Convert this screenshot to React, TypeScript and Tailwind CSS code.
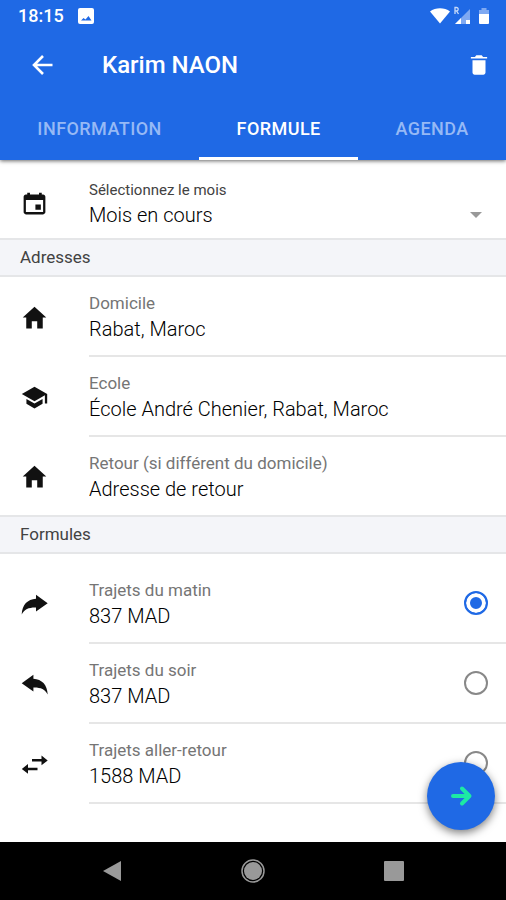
import { useState } from "react";
import type { ReactNode } from "react";
import { IoMdCalendar, IoMdHome, IoMdSchool, IoMdTrash } from "react-icons/io";

function ForwardIcon() {
  return (
    <svg className="size-[29px]" viewBox="0 0 29 29" fill="currentColor" aria-hidden="true">
      <path d="M27.700 13.200 16 4.800v4C7.500 9.500 2.200 14.500 1.700 24.500 4.500 19 9 17.200 16 17.400v4.100z" />
    </svg>
  );
}

function BackwardIcon() {
  return (
    <svg className="size-[29px]" viewBox="0 0 29 29" fill="currentColor" aria-hidden="true">
      <path d="M1.700 13.200 13.400 4.800v4c8.500.7 13.800 5.700 14.300 15.700-2.800-5.500-7.300-7.300-14.300-7.100v4.100z" />
    </svg>
  );
}

function RoundTripIcon() {
  return (
    <svg className="size-[29px]" viewBox="0 0 29 29" fill="currentColor" aria-hidden="true">
      <path d="M12 9h9.500V5.500l6.200 4.900-6.200 4.900v-3.700H12zM17.500 17.700H8V14l-6.200 4.900L8 23.800v-3.500h9.500z" />
    </svg>
  );
}

const addresses = [
  { id: "domicile", label: "Domicile", value: "Rabat, Maroc", icon: <IoMdHome /> },
  { id: "ecole", label: "Ecole", value: "École André Chenier, Rabat, Maroc", icon: <IoMdSchool /> },
  { id: "retour", label: "Retour (si différent du domicile)", value: "Adresse de retour", icon: <IoMdHome /> },
];

const plans = [
  { id: "matin", label: "Trajets du matin", price: "837 MAD", icon: <ForwardIcon /> },
  { id: "soir", label: "Trajets du soir", price: "837 MAD", icon: <BackwardIcon /> },
  { id: "aller-retour", label: "Trajets aller-retour", price: "1588 MAD", icon: <RoundTripIcon /> },
];

const tabs = ["INFORMATION", "FORMULE", "AGENDA"];

function StatusBar() {
  return (
    <div className="flex h-8 items-center pl-4.5 pr-4 text-white">
      <span className="text-lg font-medium">18:15</span>
      <svg className="ml-3.5 size-4" viewBox="0 0 16 16" aria-hidden="true">
        <rect width="16" height="16" rx="2" fill="currentColor" />
        <path d="M3 12.500 5.500 10l2 1.500L10.500 8l3 4.500z" fill="#1f69e5" />
      </svg>
      <div className="ml-auto flex items-center gap-1">
        <svg className="h-4 w-5" viewBox="0 0 20 16" aria-hidden="true">
          <path d="M10 15.500 0 3.500C5.500-.8 14.500-.8 20 3.500z" fill="currentColor" />
        </svg>
        <svg className="h-5 w-4" viewBox="0 0 16 20" aria-hidden="true">
          <path d="M16 3v15H1z" fill="#7fa9f2" />
          <path d="M7 12v6H1zM12 14h4v4h-4z" fill="currentColor" />
          <path d="M1 8V1.500h1.500a1.700 1.700 0 0 1 0 3.400H1m1.500 0L4.500 8" fill="none" stroke="#c7daf9" strokeWidth="1.300" />
        </svg>
        <svg className="ml-1 h-4.5 w-3" viewBox="0 0 12 18" aria-hidden="true">
          <path d="M1 3h2.500V1h5v2H11v5H1z" fill="#7fa9f2" />
          <path d="M1 7h10v9a1 1 0 0 1-1 1H2a1 1 0 0 1-1-1z" fill="currentColor" />
        </svg>
      </div>
    </div>
  );
}

function RowIcon({ children }: { children: ReactNode }) {
  return <span className="ml-5 mr-10 flex w-[29px] shrink-0 justify-center text-[29px] text-[#111]">{children}</span>;
}

function SectionTitle({ children }: { children: ReactNode }) {
  return (
    <h2 className="flex h-[39px] items-center border-y-2 border-[#e5e6e8] bg-[#f4f5f9] px-5 text-[17px] text-[#424242]">
      {children}
    </h2>
  );
}

export default function App() {
  const [tab, setTab] = useState("FORMULE");
  const [plan, setPlan] = useState("matin");

  return (
    <div className="flex min-h-screen flex-col bg-white font-[Roboto,sans-serif] text-[#222]">
      <header className="relative bg-[#1f69e5] text-white shadow-[0_1px_4px_rgba(0,0,0,0.6)]">
        <StatusBar />
        <div className="flex h-[66px] items-center pl-[31px] pr-3.5">
          <button type="button" aria-label="Retour">
            <svg className="size-6" viewBox="0 0 24 24" fill="none" stroke="currentColor" strokeWidth="2.600" aria-hidden="true">
              <path d="M21.500 12H3M12 3l-9 9 9 9" />
            </svg>
          </button>
          <h1 className="ml-[47px] flex-1 text-2xl font-medium">Karim NAON</h1>
          <button type="button" aria-label="Supprimer" className="text-[26px]">
            <IoMdTrash />
          </button>
        </div>
        <div role="tablist" className="flex h-[62px]">
          {tabs.map((name) => (
            <button
              key={name}
              type="button"
              role="tab"
              aria-selected={tab === name}
              onClick={() => setTab(name)}
              className={`grow border-y-[3px] border-t-transparent px-9 text-lg font-medium tracking-wide ${
                tab === name ? "border-b-white text-white" : "border-b-transparent text-[#96b9f5]"
              }`}
            >
              {name}
            </button>
          ))}
        </div>
      </header>

      <main className="flex-1 pb-9">
        <div className="flex h-[78px] items-center pt-2">
          <RowIcon>
            <IoMdCalendar />
          </RowIcon>
          <div className="min-w-0 flex-1">
            <label htmlFor="mois" className="block text-[15px] leading-6 text-[#424242]">
              Sélectionnez le mois
            </label>
            <div className="flex items-center pr-6">
              <select
                id="mois"
                className="h-[26px] min-w-0 flex-1 appearance-none bg-transparent text-xl font-light leading-[26px] text-black"
              >
                <option>Mois en cours</option>
                <option>Mois prochain</option>
              </select>
              <svg className="h-1.5 w-3" viewBox="0 0 12 6" aria-hidden="true">
                <path d="M0 0h12L6 6z" fill="#999" />
              </svg>
            </div>
          </div>
        </div>

        <SectionTitle>Adresses</SectionTitle>
        <div>
          {addresses.map((a) => (
            <div key={a.id} className="group flex items-center">
              <RowIcon>{a.icon}</RowIcon>
              <div className="flex min-w-0 flex-1 flex-col border-b-2 border-[#e6e6e6] py-[13px] group-last:border-b-0">
                <label htmlFor={a.id} className="text-[17px] leading-[26px] text-[#757575]">
                  {a.label}
                </label>
                <input
                  id={a.id}
                  type="text"
                  defaultValue={a.value}
                  className="h-[26px] w-full bg-transparent text-xl font-light leading-[26px] text-black outline-none"
                />
              </div>
            </div>
          ))}
        </div>

        <SectionTitle>Formules</SectionTitle>
        <div className="pt-2.5">
          {plans.map((p) => (
            <label key={p.id} className="flex h-20 items-center">
              <RowIcon>{p.icon}</RowIcon>
              <span className="flex h-full flex-1 items-center border-b-2 border-[#e6e6e6] pr-4.5">
                <span className="flex flex-1 flex-col">
                  <span className="text-[17px] leading-[26px] text-[#757575]">{p.label}</span>
                  <span className="text-xl font-light leading-[26px] text-black">{p.price}</span>
                </span>
                <input
                  type="radio"
                  name="formule"
                  checked={plan === p.id}
                  onChange={() => setPlan(p.id)}
                  className="size-6 appearance-none rounded-full border-2 border-[#888] checked:border-[#1f69e5] checked:bg-[#1f69e5] checked:shadow-[inset_0_0_0_4px_white]"
                />
              </span>
            </label>
          ))}
        </div>
      </main>

      <button
        type="button"
        aria-label="Continuer"
        className="fixed bottom-[70px] right-[11px] flex size-[68px] items-center justify-center rounded-full bg-[#1f69e5] text-[#1de9a4] shadow-[0_3px_8px_rgba(0,0,0,0.5)]"
      >
        <svg className="size-6" viewBox="0 0 24 24" fill="none" stroke="currentColor" strokeWidth="4" strokeLinecap="round" strokeLinejoin="round" aria-hidden="true">
          <path d="M4 12h16M13 4.500l7.500 7.500L13 19.500" />
        </svg>
      </button>

      <nav className="flex h-[58px] items-center justify-center gap-[117px] bg-black text-[#999]">
        <button type="button" aria-label="Précédent">
          <svg className="size-6" viewBox="0 0 24 24" fill="currentColor" aria-hidden="true">
            <path d="M21 2v20L3 12z" />
          </svg>
        </button>
        <button type="button" aria-label="Accueil">
          <svg className="size-6" viewBox="0 0 24 24" aria-hidden="true">
            <circle cx="12" cy="12" r="9" fill="currentColor" />
            <circle cx="12" cy="12" r="11" fill="none" stroke="currentColor" strokeWidth="1.500" />
          </svg>
        </button>
        <button type="button" aria-label="Applications récentes">
          <svg className="size-6" viewBox="0 0 24 24" fill="currentColor" aria-hidden="true">
            <rect x="2" y="2" width="20" height="20" rx="1" />
          </svg>
        </button>
      </nav>
    </div>
  );
}
